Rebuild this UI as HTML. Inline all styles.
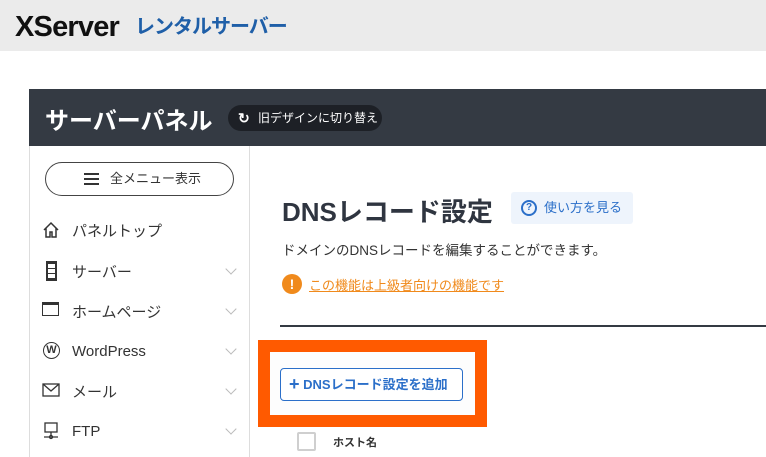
<!DOCTYPE html>
<html><head><meta charset="utf-8"><style>
*{margin:0;padding:0;box-sizing:border-box}
body{width:766px;height:457px;overflow:hidden;background:#fff;font-family:"Liberation Sans","Noto Sans CJK JP",sans-serif;position:relative;color:#333}
.a{position:absolute}
.ch{position:absolute;left:227px;width:8px;height:8px;border-right:1px solid #bbb;border-bottom:1px solid #bbb;transform:rotate(45deg)}
</style></head><body>
<div class="a" style="top:0;width:766px;height:51px;left:0;background:#ebebeb"></div>
<div class="a" style="left:15px;top:11px;font-size:29px;font-weight:bold;letter-spacing:-0.8px;color:#111;line-height:32px">XServer</div>
<div class="a" style="left:135px;top:13px;font-size:20px;font-weight:bold;color:#1f5fa8;line-height:28px;letter-spacing:-1px">レンタルサーバー</div>
<div class="a" style="left:29px;top:89px;width:737px;height:57px;background:#343a43"></div>
<div class="a" style="left:45px;top:101px;font-size:24px;font-weight:bold;color:#fff">サーバーパネル</div>
<div class="a" style="left:228px;top:105px;width:154px;height:26px;border-radius:13px;background:#1d2026;color:#fff;font-size:12px;line-height:26px;padding-left:30px">旧デザインに切り替え</div>
<div class="a" style="left:238px;top:110px;color:#fff;font-size:14px;font-weight:bold">↻</div>
<div class="a" style="left:29px;top:146px;width:1px;height:311px;background:#ddd"></div>
<div class="a" style="left:249px;top:146px;width:1px;height:311px;background:#ddd"></div>
<div class="a" style="left:45px;top:162px;width:189px;height:34px;border:1px solid #444;border-radius:17px;font-size:13px;line-height:32px;padding-left:64px">全メニュー表示</div>
<div class="a" style="left:84px;top:173px;width:15px;height:12px;border-top:2px solid #333;border-bottom:2px solid #333"><div style="margin-top:3px;height:2px;background:#333"></div></div>
<div class="a" style="left:72px;top:220px;font-size:15px">パネルトップ</div>
<svg class="a" style="left:42px;top:221px" width="18" height="18" viewBox="0 0 18 18" fill="none" stroke="#333" stroke-width="1.5"><path d="M2 9 L9 2 L16 9 M4 7 V16 H8 V11 H10 V16 H14 V7"/></svg>
<div class="a" style="left:72px;top:261px;font-size:15px">サーバー</div>
<div class="a" style="left:46px;top:261px;width:11px;height:20px;border:2px solid #333;background:repeating-linear-gradient(#333 0 1px,#fff 1px 5px)"></div>
<div class="a" style="left:72px;top:301px;font-size:15px">ホームページ</div>
<div class="a" style="left:42px;top:302px;width:17px;height:14px;border:1.5px solid #333;border-top-width:3px"></div>
<div class="a" style="left:72px;top:343px;font-size:15px">WordPress</div>
<div class="a" style="left:43px;top:342px;width:17px;height:17px;border:1.5px solid #333;border-radius:50%;font-size:11px;font-weight:bold;text-align:center;line-height:14px">W</div>
<div class="a" style="left:72px;top:381px;font-size:15px">メール</div>
<svg class="a" style="left:42px;top:383px" width="18" height="14" viewBox="0 0 18 14" fill="none" stroke="#333" stroke-width="1.3"><rect x="1" y="1" width="16" height="12"/><path d="M1 1 L9 8 L17 1"/></svg>
<div class="a" style="left:72px;top:423px;font-size:15px">FTP</div>
<svg class="a" style="left:42px;top:422px" width="18" height="18" viewBox="0 0 18 18" fill="none" stroke="#333" stroke-width="1.3"><rect x="3" y="1" width="12" height="9"/><path d="M9 10 V14 M2 15 H16"/><circle cx="9" cy="15" r="1.5"/></svg>
<div class="ch" style="top:265px"></div>
<div class="ch" style="top:305px"></div>
<div class="ch" style="top:345px"></div>
<div class="ch" style="top:385px"></div>
<div class="ch" style="top:425px"></div>
<div class="a" style="left:282px;top:192px;font-size:26px;font-weight:bold;color:#2f3540">DNSレコード設定</div>
<div class="a" style="left:511px;top:192px;width:122px;height:32px;background:#eef4fc;border-radius:3px;color:#2b6fc9;font-size:13px;line-height:32px;padding-left:33px">使い方を見る</div>
<div class="a" style="left:521px;top:200px;width:16px;height:16px;border:2px solid #2b6fc9;border-radius:50%;color:#2b6fc9;font-size:10px;font-weight:bold;text-align:center;line-height:12px">?</div>
<div class="a" style="left:282px;top:239px;font-size:13.5px;color:#333">ドメインのDNSレコードを編集することができます。</div>
<div class="a" style="left:282px;top:274px;width:20px;height:20px;border-radius:50%;background:#f08a1c;color:#fff;font-weight:bold;font-size:14px;text-align:center;line-height:20px">!</div>
<div class="a" style="left:309px;top:275px;font-size:13px;color:#f08a1c;text-decoration:underline">この機能は上級者向けの機能です</div>
<div class="a" style="left:280px;top:325px;width:486px;height:2px;background:#343a43"></div>
<div class="a" style="left:258px;top:340px;width:229px;height:87px;border:12px solid #ff5a00;background:#fdfdfd"></div>
<div class="a" style="left:280px;top:368px;width:183px;height:33px;border:1px solid #2b6fc9;border-radius:4px;color:#2b6fc9;font-size:13px;font-weight:bold;line-height:31px;padding-left:8px;background:#fff"><span style="font-size:18px;vertical-align:-1px">+</span> DNSレコード設定を追加</div>
<div class="a" style="left:297px;top:432px;width:19px;height:19px;border:2px solid #cfcfcf;border-radius:2px"></div>
<div class="a" style="left:333px;top:434px;font-size:11px;font-weight:bold">ホスト名</div>
</body></html>
